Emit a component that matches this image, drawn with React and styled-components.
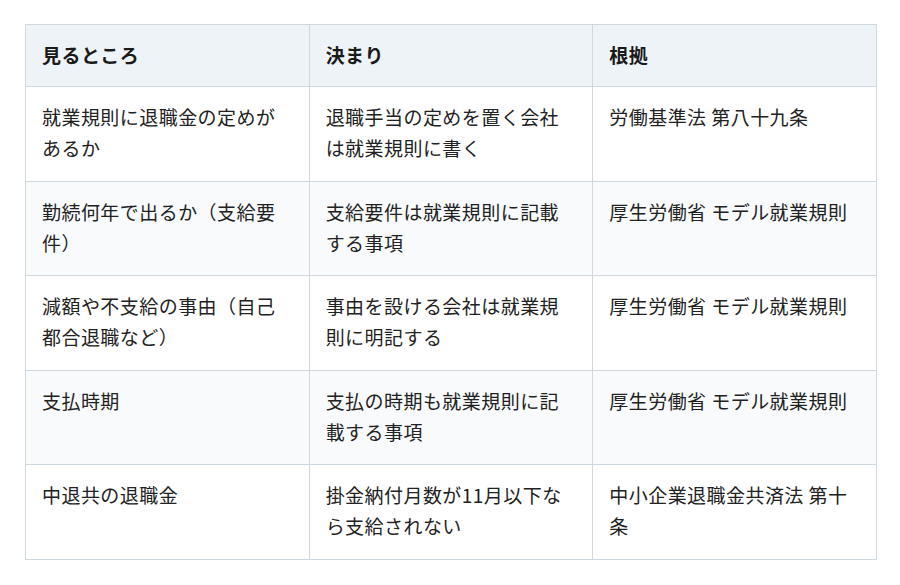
import React from "react";
import styled, { createGlobalStyle } from "styled-components";

const GlobalStyle = createGlobalStyle`
  html, body {
    margin: 0;
    padding: 0;
    background: #ffffff;
  }
  body {
    font-family: "Noto Sans CJK JP", "Noto Sans", sans-serif;
    color: #222222;
  }
`;

const Page = styled.div`
  padding: 24px 24px 0 25px;
`;

const Table = styled.table`
  width: 852px;
  border-collapse: collapse;
  table-layout: fixed;
  border: 1px solid #cfd7df;
  font-size: 19px;
  letter-spacing: 0.45px;
  line-height: 31px;
`;

const HeadCell = styled.th`
  text-align: left;
  font-weight: 700;
  background: #eef3f7;
  border: 1px solid #cfd7df;
  padding: 14px 16px 16px;
  color: #1a1a1a;
`;

const Row = styled.tr`
  background: ${(p) => (p.$striped ? "#f8fafc" : "#ffffff")};
`;

const Cell = styled.td`
  vertical-align: top;
  border: 1px solid #cfd7df;
  padding: 14px 16px 17.5px;
  color: #222222;
`;

const rows = [
  [["就業規則に退職金の定めが", "あるか"], ["退職手当の定めを置く会社", "は就業規則に書く"], ["労働基準法 第八十九条"]],
  [["勤続何年で出るか（支給要", "件）"], ["支給要件は就業規則に記載", "する事項"], ["厚生労働省 モデル就業規則"]],
  [["減額や不支給の事由（自己", "都合退職など）"], ["事由を設ける会社は就業規", "則に明記する"], ["厚生労働省 モデル就業規則"]],
  [["支払時期"], ["支払の時期も就業規則に記", "載する事項"], ["厚生労働省 モデル就業規則"]],
  [["中退共の退職金"], ["掛金納付月数が11月以下な", "ら支給されない"], ["中小企業退職金共済法 第十", "条"]],
];

const Lines = ({ lines }) =>
  lines.map((l, i) => (
    <React.Fragment key={i}>
      {i > 0 && <br />}
      {l}
    </React.Fragment>
  ));

export default function App() {
  return (
    <>
      <GlobalStyle />
      <Page>
        <Table>
          <thead>
            <tr>
              <HeadCell>見るところ</HeadCell>
              <HeadCell>決まり</HeadCell>
              <HeadCell>根拠</HeadCell>
            </tr>
          </thead>
          <tbody>
            {rows.map((r, i) => (
              <Row key={i} $striped={i % 2 === 1}>
                {r.map((c, j) => (
                  <Cell key={j}>
                    <Lines lines={c} />
                  </Cell>
                ))}
              </Row>
            ))}
          </tbody>
        </Table>
      </Page>
    </>
  );
}
